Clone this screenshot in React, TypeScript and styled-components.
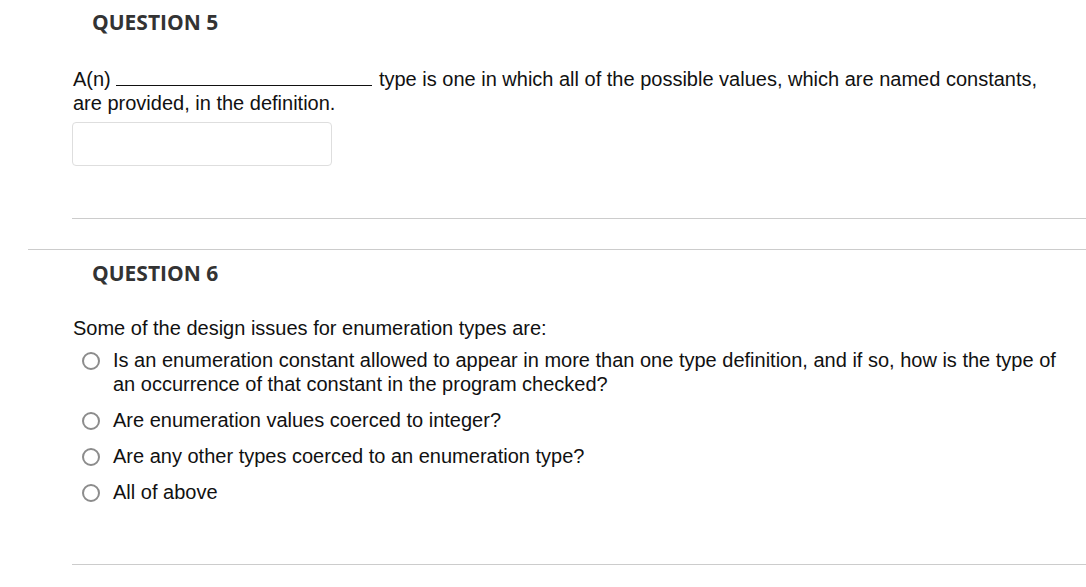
import React from "react";
import styled, { createGlobalStyle } from "styled-components";

const GlobalStyle = createGlobalStyle`
  html, body {
    margin: 0;
    padding: 0;
    background: #ffffff;
  }
  body {
    font-family: "Liberation Sans", Arial, sans-serif;
    color: #111111;
  }
`;

const options = [
  "Is an enumeration constant allowed to appear in more than one type definition, and if so, how is the type of an occurrence of that constant in the program checked?",
  "Are enumeration values coerced to integer?",
  "Are any other types coerced to an enumeration type?",
  "All of above",
];

export default function App() {
  return (
    <Page>
      <GlobalStyle />
      <Question>
        <Heading>QUESTION 5</Heading>
        <Prompt>
          A(n) <Blank /> type is one in which all of the possible values, which
          are named constants, are provided, in the definition.
        </Prompt>
        <AnswerBox type="text" />
        <Rule />
      </Question>

      <WideRule />

      <Question $top={11}>
        <Heading>QUESTION 6</Heading>
        <Prompt>Some of the design issues for enumeration types are:</Prompt>
        <Options>
          {options.map((opt) => (
            <Option key={opt}>
              <Radio />
              <OptionText>{opt}</OptionText>
            </Option>
          ))}
        </Options>
        <Rule $top={60} />
      </Question>
    </Page>
  );
}

const Page = styled.div`
  width: 1086px;
  padding-left: 28px;
  box-sizing: border-box;
`;

const Question = styled.div<{ $top?: number }>`
  padding-left: 44px;
  padding-top: ${(p) => p.$top ?? 10}px;
  display: flex;
  flex-direction: column;
  align-items: flex-start;
`;

const Heading = styled.h2`
  margin: 0 0 31px 20px;
  font-family: "Open Sans", sans-serif;
  font-weight: 700;
  font-size: 21px;
  line-height: 24px;
  color: #333333;
`;

const Prompt = styled.div`
  width: 993px;
  font-size: 20px;
  line-height: 24px;
  padding-left: 1px;
  color: #111111;
`;

const Blank = styled.span`
  display: inline-block;
  width: 256px;
  height: 20px;
  border-bottom: 1px solid #111111;
  vertical-align: baseline;
  margin-right: 1px;
`;

const AnswerBox = styled.input`
  margin-top: 7px;
  width: 260px;
  height: 44px;
  box-sizing: border-box;
  border: 1px solid #dedede;
  border-radius: 4px;
  background: #ffffff;
  outline: none;
`;

const Rule = styled.div<{ $top?: number }>`
  align-self: stretch;
  height: 1px;
  background: #cccccc;
  margin-top: ${(p) => p.$top ?? 52}px;
`;

const WideRule = styled.div`
  height: 1px;
  background: #cccccc;
  margin-top: 30px;
`;

const Options = styled.div`
  margin-top: 8px;
  padding-left: 10px;
  display: flex;
  flex-direction: column;
  gap: 12px;
`;

const Option = styled.label`
  display: flex;
  align-items: flex-start;
  gap: 13px;
  font-size: 20px;
  line-height: 24px;
`;

const Radio = styled.span`
  flex: none;
  width: 18px;
  height: 18px;
  margin-top: 4px;
  box-sizing: border-box;
  border: 2px solid #8c8c8c;
  border-radius: 50%;
  background: #ffffff;
`;

const OptionText = styled.span`
  width: 950px;
  color: #111111;
`;
